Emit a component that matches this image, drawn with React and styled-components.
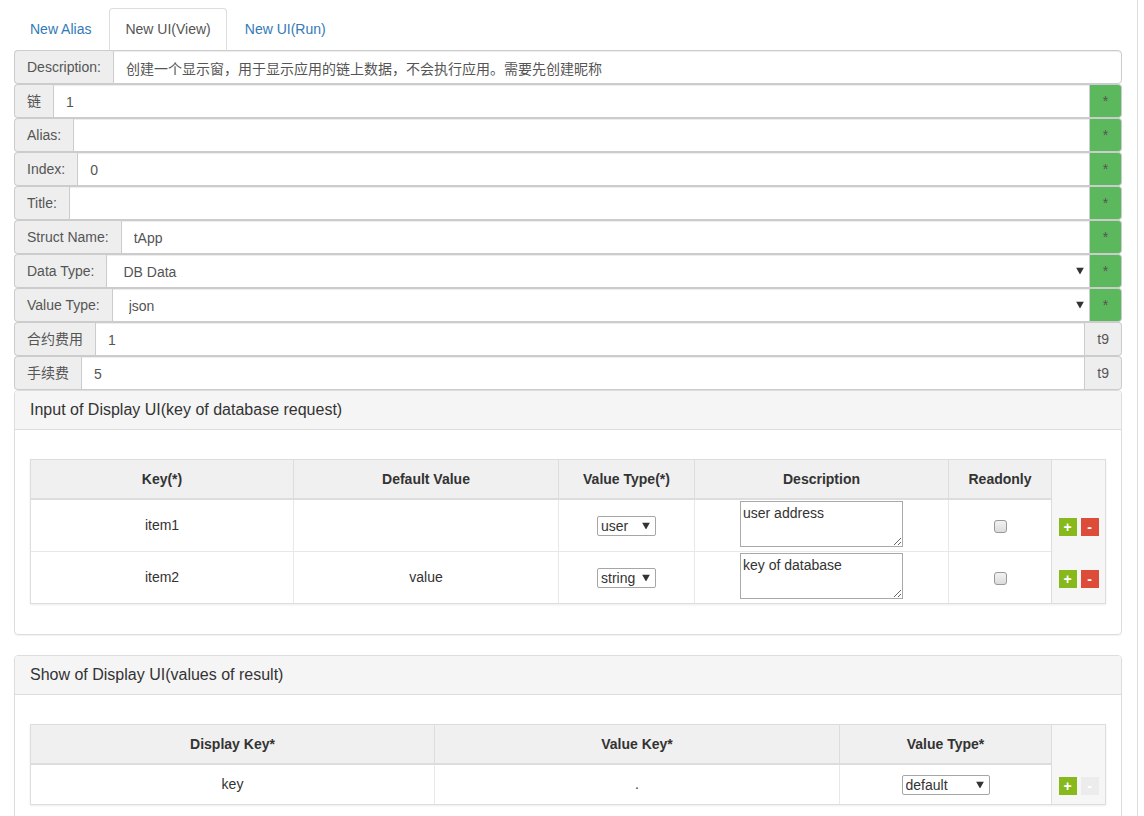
import React from "react";
import styled, { createGlobalStyle, css } from "styled-components";

const GlobalStyle = createGlobalStyle`
  html, body {
    margin: 0;
    padding: 0;
    background: #fff;
    overflow: hidden;
  }
  body {
    font-family: "Liberation Sans", "Noto Sans CJK SC", Arial, sans-serif;
    font-size: 14px;
    line-height: 1.42857;
    color: #333;
  }
  * {
    box-sizing: border-box;
  }
`;

const Page = styled.div`
  width: 1138px;
  min-height: 100vh;
  padding: 8px 15px 0 14px;
  border-right: 1px solid #ddd;
`;

const Tabs = styled.div`
  display: flex;
  height: 42px;
`;

const Tab = styled.div`
  padding: 10px 15px;
  margin-right: 2px;
  line-height: 21px;
  border: 1px solid transparent;
  border-radius: 4px 4px 0 0;
  color: #337ab7;

  ${(p) =>
    p.$active &&
    css`
      color: #555;
      background: #fff;
      border-color: #ddd;
      border-bottom-color: transparent;
    `}
`;

const FieldRow = styled.div`
  display: flex;
  height: 34px;
`;

const Addon = styled.div`
  display: flex;
  align-items: center;
  justify-content: center;
  padding: 1px 12px 0;
  min-width: ${(p) => (p.$green ? "32px" : "0")};
  background: ${(p) => (p.$green ? "#5cb85c" : "#eee")};
  border: 1px solid #ccc;
  color: #555;
  font-size: 14px;
  white-space: nowrap;
  border-radius: ${(p) => (p.$side === "right" ? "0 4px 4px 0" : "4px 0 0 4px")};
  ${(p) => (p.$side === "right" ? "border-left: 0;" : "border-right: 0;")}
`;

const fieldLook = css`
  height: 34px;
  border: 1px solid #ccc;
  background: #fff;
  color: #555;
  font-family: inherit;
  font-size: 14px;
  box-shadow: inset 0 1px 1px rgba(0, 0, 0, 0.075);
  outline: none;
`;

const FieldInput = styled.input`
  ${fieldLook}
  flex: 1;
  min-width: 0;
  padding: 1px 12px 0;
  border-radius: ${(p) => (p.$last ? "0 4px 4px 0" : "0")};
`;

const SelectWrap = styled.div`
  position: relative;
  flex: 1;
  display: flex;
`;

const FieldSelect = styled.select`
  ${fieldLook}
  appearance: none;
  width: 100%;
  padding: 1px 24px 0 16px;
  border-radius: 0;
`;

const Caret = styled.svg`
  position: absolute;
  right: ${(p) => p.$right || 6}px;
  top: 50%;
  transform: translateY(-50%);
  pointer-events: none;
`;

const Panel = styled.div`
  border: 1px solid #ddd;
  border-radius: 4px;
  margin-bottom: 20px;
  box-shadow: 0 1px 1px rgba(0, 0, 0, 0.05);
`;

const PanelHeading = styled.div`
  padding: 10px 15px;
  background: #f5f5f5;
  border-bottom: 1px solid #ddd;
  border-radius: 3px 3px 0 0;
  font-size: 16px;
  line-height: 18px;
  color: #333;
`;

const PanelBody = styled.div`
  padding: 29px 15px 15px;
`;

const TableWrap = styled.div`
  display: flex;
  margin-bottom: 15px;
  border: 1px solid #ddd;
  box-shadow: 0 1px 2px rgba(0, 0, 0, 0.08);
`;

const Cols = styled.div`
  flex: 1;
  display: grid;
  grid-template-columns: ${(p) => p.$cols};
`;

const HeadCell = styled.div`
  height: 40px;
  display: flex;
  align-items: center;
  justify-content: center;
  padding-top: 1px;
  background: #f0f0f0;
  border-bottom: 2px solid #ddd;
  border-right: ${(p) => (p.$last ? "0" : "1px solid #ddd")};
  font-weight: bold;
  color: #333;
`;

const BodyCell = styled.div`
  height: ${(p) => p.$h}px;
  display: flex;
  align-items: ${(p) => (p.$top ? "flex-start" : "center")};
  padding-top: ${(p) => (p.$top ? "0" : "1px")};
  justify-content: center;
  border-right: ${(p) => (p.$lastCol ? "0" : "1px solid #e8e8e8")};
  border-bottom: ${(p) => (p.$lastRow ? "0" : "1px solid #e8e8e8")};
  color: #333;
`;

const ActionCol = styled.div`
  width: 54px;
  display: flex;
  flex-direction: column;
  padding-top: 40px;
  background: #f6f6f6;
  border-left: 1px solid #ddd;
`;

const ActionCell = styled.div`
  height: ${(p) => p.$h}px;
  display: flex;
  align-items: center;
  justify-content: center;
  gap: 4px;
  padding-top: 2px;
`;

const SquareBtn = styled.button`
  width: 18px;
  height: 18px;
  padding: 0;
  border: 0;
  font-family: inherit;
  font-size: 14px;
  font-weight: bold;
  line-height: 18px;
  color: #fff;
  background: ${(p) =>
    p.$kind === "add" ? "#87b91c" : p.$kind === "del" ? "#dd4b39" : "#ececec"};
`;

const MiniWrap = styled.div`
  position: relative;
  display: inline-flex;
`;

const MiniSelect = styled.select`
  appearance: none;
  width: ${(p) => p.$w}px;
  height: 20px;
  padding: 0 16px 0 3px;
  border: 1px solid #a6a6a6;
  border-radius: 2px;
  background: #fff;
  color: #333;
  font-family: inherit;
  font-size: 14px;
  outline: none;
`;

const Note = styled.textarea`
  width: 163px;
  height: 46px;
  margin-top: 1px;
  padding: 2px 2px;
  border: 1px solid #a9a9a9;
  font-family: inherit;
  font-size: 14px;
  line-height: 18px;
  color: #333;
  outline: none;
`;

const Check = styled.input`
  appearance: none;
  width: 13px;
  height: 13px;
  margin: 0;
  border: 1px solid #999;
  border-radius: 3px;
  background: linear-gradient(#f2f2f2, #dcdcdc);
`;

const CaretIcon = ({ right }) => (
  <Caret $right={right} width="8" height="7" viewBox="0 0 8 7">
    <polygon points="0,0 8,0 4,7" fill="#333" />
  </Caret>
);

const Field = ({ label, value, select, suffix }) => (
  <FieldRow>
    <Addon $side="left">{label}</Addon>
    {select ? (
      <SelectWrap>
        <FieldSelect defaultValue={value}>
          <option>{value}</option>
        </FieldSelect>
        <CaretIcon right={6} />
      </SelectWrap>
    ) : (
      <FieldInput defaultValue={value} $last={!suffix} />
    )}
    {suffix === "*" && (
      <Addon $side="right" $green>
        *
      </Addon>
    )}
    {suffix === "t9" && <Addon $side="right">t9</Addon>}
  </FieldRow>
);

const Mini = ({ value, w }) => (
  <MiniWrap>
    <MiniSelect $w={w} defaultValue={value}>
      <option>{value}</option>
    </MiniSelect>
    <CaretIcon right={6} />
  </MiniWrap>
);

const fields = [
  {
    label: "Description:",
    value: "创建一个显示窗，用于显示应用的链上数据，不会执行应用。需要先创建昵称",
  },
  { label: "链", value: "1", suffix: "*" },
  { label: "Alias:", value: "", suffix: "*" },
  { label: "Index:", value: "0", suffix: "*" },
  { label: "Title:", value: "", suffix: "*" },
  { label: "Struct Name:", value: "tApp", suffix: "*" },
  { label: "Data Type:", value: "DB Data", select: true, suffix: "*" },
  { label: "Value Type:", value: "json", select: true, suffix: "*" },
  { label: "合约费用", value: "1", suffix: "t9" },
  { label: "手续费", value: "5", suffix: "t9" },
];

const inputRows = [
  { key: "item1", def: "", type: "user", desc: "user address" },
  { key: "item2", def: "value", type: "string", desc: "key of database" },
];

const inputHeads = ["Key(*)", "Default Value", "Value Type(*)", "Description", "Readonly"];
const showHeads = ["Display Key*", "Value Key*", "Value Type*"];

export default function App() {
  return (
    <>
      <GlobalStyle />
      <Page>
        <Tabs>
          <Tab>New Alias</Tab>
          <Tab $active>New UI(View)</Tab>
          <Tab>New UI(Run)</Tab>
        </Tabs>

        {fields.map((f) => (
          <Field key={f.label} {...f} />
        ))}

        <Panel>
          <PanelHeading>Input of Display UI(key of database request)</PanelHeading>
          <PanelBody>
            <TableWrap>
              <Cols $cols="263px 265px 136px 254px 102px">
                {inputHeads.map((h, i) => (
                  <HeadCell key={h} $last={i === inputHeads.length - 1}>
                    {h}
                  </HeadCell>
                ))}
                {inputRows.map((r, ri) => {
                  const lastRow = ri === inputRows.length - 1;
                  const h = lastRow ? 51 : 52;
                  return (
                    <React.Fragment key={r.key}>
                      <BodyCell $h={h} $lastRow={lastRow}>
                        {r.key}
                      </BodyCell>
                      <BodyCell $h={h} $lastRow={lastRow}>
                        {r.def}
                      </BodyCell>
                      <BodyCell $h={h} $lastRow={lastRow}>
                        <Mini value={r.type} w={59} />
                      </BodyCell>
                      <BodyCell $h={h} $lastRow={lastRow} $top>
                        <Note defaultValue={r.desc} />
                      </BodyCell>
                      <BodyCell $h={h} $lastRow={lastRow} $lastCol>
                        <Check type="checkbox" />
                      </BodyCell>
                    </React.Fragment>
                  );
                })}
              </Cols>
              <ActionCol>
                {inputRows.map((r, ri) => (
                  <ActionCell key={r.key} $h={ri === inputRows.length - 1 ? 51 : 52}>
                    <SquareBtn $kind="add">+</SquareBtn>
                    <SquareBtn $kind="del">-</SquareBtn>
                  </ActionCell>
                ))}
              </ActionCol>
            </TableWrap>
          </PanelBody>
        </Panel>

        <Panel>
          <PanelHeading>Show of Display UI(values of result)</PanelHeading>
          <PanelBody>
            <TableWrap>
              <Cols $cols="404px 405px 211px">
                {showHeads.map((h, i) => (
                  <HeadCell key={h} $last={i === showHeads.length - 1}>
                    {h}
                  </HeadCell>
                ))}
                <BodyCell $h={39} $lastRow>
                  key
                </BodyCell>
                <BodyCell $h={39} $lastRow>
                  .
                </BodyCell>
                <BodyCell $h={39} $lastRow $lastCol>
                  <Mini value="default" w={88} />
                </BodyCell>
              </Cols>
              <ActionCol>
                <ActionCell $h={39}>
                  <SquareBtn $kind="add">+</SquareBtn>
                  <SquareBtn $kind="off">-</SquareBtn>
                </ActionCell>
              </ActionCol>
            </TableWrap>
          </PanelBody>
        </Panel>
      </Page>
    </>
  );
}
